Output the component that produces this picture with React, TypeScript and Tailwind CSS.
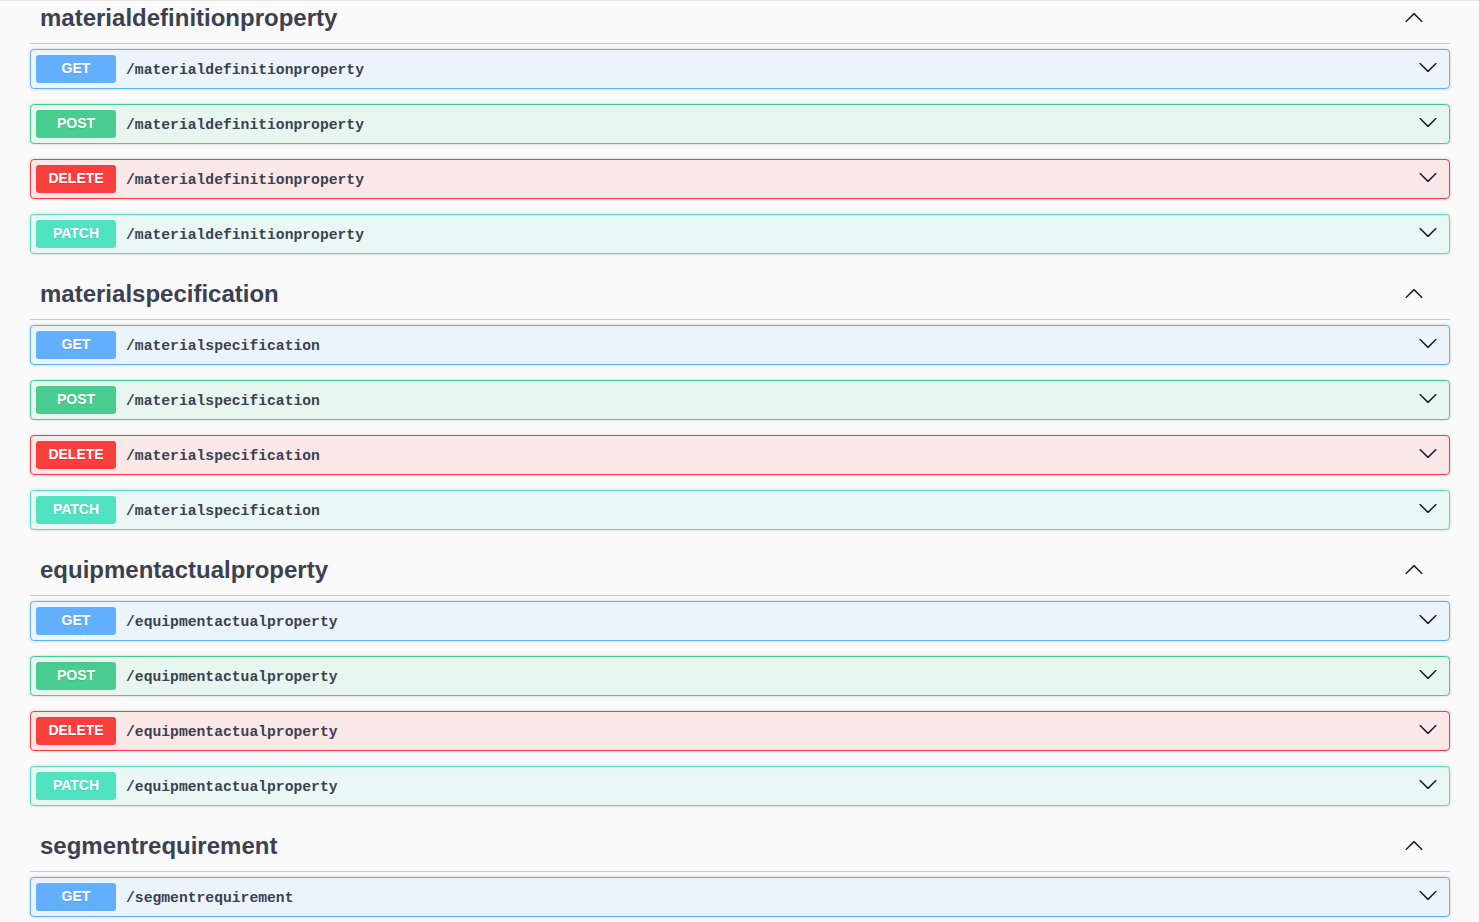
import React from "react";

type Method = "GET" | "POST" | "DELETE" | "PATCH";

const styles: Record<Method, { block: string; badge: string }> = {
  GET: { block: "bg-[#ebf3fb] border-[#61affe]", badge: "bg-[#61affe]" },
  POST: { block: "bg-[#e8f6f0] border-[#49cc90]", badge: "bg-[#49cc90]" },
  DELETE: { block: "bg-[#fae7e7] border-[#f93e3e]", badge: "bg-[#f93e3e]" },
  PATCH: { block: "bg-[#e9f8f5] border-[#50e3c2]", badge: "bg-[#50e3c2]" },
};

const ARROW =
  "M17.418 6.109c.272-.268.709-.268.979 0s.271.701 0 .969l-7.908 7.83c-.27.268-.707.268-.979 0l-7.908-7.83c-.27-.268-.27-.701 0-.969.271-.268.709-.268.979 0L10 13.25l7.418-7.141z";

function ArrowDown({ className }: { className?: string }) {
  return (
    <svg viewBox="0 0 20 20" width="20" height="20" className={className} fill="#1a1a1a">
      <path d={ARROW} />
    </svg>
  );
}

function ArrowUp({ className }: { className?: string }) {
  return (
    <svg viewBox="0 0 20 20" width="20" height="20" className={className} fill="#1a1a1a">
      <path d={ARROW} transform="rotate(180 10 10)" />
    </svg>
  );
}

function OpBlock({ method, path }: { method: Method; path: string }) {
  const s = styles[method];
  return (
    <div
      className={`mb-[15px] flex h-[40px] items-center rounded-[4px] border p-[5px] shadow-[0_0_3px_rgba(0,0,0,0.19)] ${s.block}`}
    >
      <span
        className={`flex h-[28px] w-[80px] shrink-0 items-center justify-center rounded-[3px] pb-[1px] text-[14px] font-bold text-white [text-shadow:0_1px_0_rgba(0,0,0,0.1)] ${s.badge}`}
        style={{ fontFamily: '"Liberation Sans", Arial, sans-serif' }}
      >
        {method}
      </span>
      <span
        className="px-[10px] pt-[3px] text-[14.7px] font-bold text-[#3b4151]"
        style={{ fontFamily: '"Liberation Mono", "DejaVu Sans Mono", monospace' }}
      >
        {path}
      </span>
      <div className="flex-1" />
      <ArrowDown className="mr-[6px] mb-[4px] shrink-0" />
    </div>
  );
}

function Section({ name, methods }: { name: string; methods: Method[] }) {
  return (
    <div>
      <div className="mb-[5px] flex h-[51px] items-center border-b border-[#c4c6cb] pl-[10px] pr-[26px]">
        <h3
          className="flex-1 text-[24px] font-bold text-[#3b4151]"
          style={{ fontFamily: '"Liberation Sans", Arial, sans-serif' }}
        >
          {name}
        </h3>
        <ArrowUp className="shrink-0" />
      </div>
      {methods.map((m) => (
        <OpBlock key={m} method={m} path={`/${name}`} />
      ))}
    </div>
  );
}

export default function App() {
  const all: Method[] = ["GET", "POST", "DELETE", "PATCH"];
  const sections: { name: string; methods: Method[] }[] = [
    { name: "materialdefinitionproperty", methods: all },
    { name: "materialspecification", methods: all },
    { name: "equipmentactualproperty", methods: all },
    { name: "segmentrequirement", methods: ["GET"] },
  ];
  return (
    <div className="h-[922px] w-full overflow-hidden border-t border-[#e6e6e6] bg-[#fafafa]">
      <div className="-mt-[8px] pl-[30px] pr-[29px]">
        {sections.map((s) => (
          <Section key={s.name} name={s.name} methods={s.methods} />
        ))}
      </div>
    </div>
  );
}
